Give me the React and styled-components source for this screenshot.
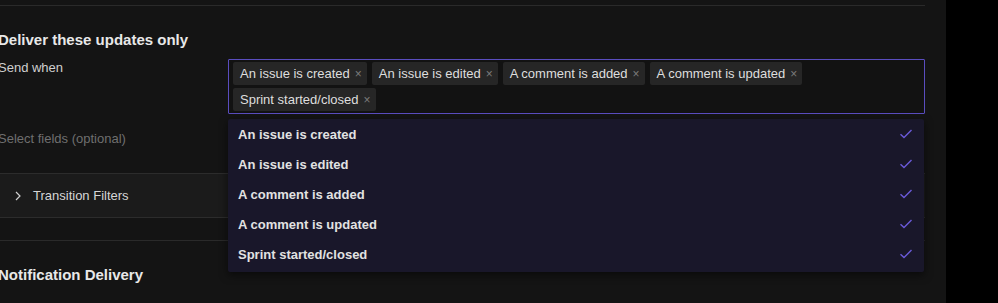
import React from "react";
import styled, { createGlobalStyle } from "styled-components";

const GlobalStyle = createGlobalStyle`
  html, body {
    margin: 0;
    padding: 0;
    background: #000;
    font-family: "Liberation Sans", Arial, sans-serif;
    overflow: hidden;
  }
`;

const Page = styled.div`
  width: 946px;
  height: 303px;
  background: #141414;
  overflow: hidden;
`;

const Content = styled.div`
  margin-left: -2px;
  width: 927px;
  padding-top: 5px;
`;

const Divider = styled.div`
  height: 1px;
  background: #2a2a2a;
  margin-top: ${(p) => p.$top || 0}px;
`;

const SectionTitle = styled.h3`
  margin: ${(p) => p.$top}px 0 0;
  font-size: 15px;
  line-height: 17px;
  font-weight: 700;
  color: #e8e8e8;
`;

const FieldRow = styled.div`
  display: flex;
  align-items: flex-start;
  margin-top: ${(p) => p.$top || 0}px;
`;

const Label = styled.div`
  width: 230px;
  flex-shrink: 0;
  font-size: 13px;
  line-height: 16px;
  color: ${(p) => (p.$muted ? "#6f6f6f" : "#cfcfcf")};
`;

const SelectWrap = styled.div`
  position: relative;
  flex: 1;
  margin-top: -1px;
`;

const SelectBox = styled.div`
  display: flex;
  flex-wrap: wrap;
  gap: 3px 5px;
  padding: 2px 4px;
  min-height: 49px;
  border: 1px solid #5a4dbf;
  border-radius: 1px;
  background: #121212;
`;

const Tag = styled.span`
  display: inline-flex;
  align-items: center;
  height: 23px;
  padding: 0 5px 0 7px;
  background: #262626;
  border-radius: 2px;
  color: #dedede;
  font-size: 13px;
`;

const TagClose = styled.span`
  margin-left: 5px;
  color: #7b7b7b;
  font-size: 12px;
`;

const Menu = styled.ul`
  position: absolute;
  left: 0;
  right: 1px;
  top: 60px;
  margin: 0;
  padding: 0 0 3px;
  list-style: none;
  background: #19172a;
  border-radius: 2px;
  box-shadow: 0 3px 8px rgba(0, 0, 0, 0.55);
  z-index: 2;
`;

const MenuItem = styled.li`
  display: flex;
  align-items: center;
  justify-content: space-between;
  height: 30px;
  padding: 0 11px 0 10px;
  color: #e2e2e2;
  font-size: 13px;
  font-weight: 700;
`;

const Collapse = styled.div`
  display: flex;
  align-items: center;
  gap: 11px;
  height: 43px;
  margin-top: 26px;
  padding-left: 16px;
  background: #1b1b1b;
  border-top: 1px solid #2c2c2c;
  border-bottom: 1px solid #2c2c2c;
  color: #d6d6d6;
  font-size: 13px;
`;

const Check = () => (
  <svg width="14" height="12" viewBox="0 0 14 12" fill="none">
    <path d="M1.5 6.2 L5 9.6 L12.5 2" stroke="#6a5ad8" strokeWidth="1.4" />
  </svg>
);

const Chevron = () => (
  <svg width="8" height="10" viewBox="0 0 8 10" fill="none">
    <path d="M2 1 L6 5 L2 9" stroke="#d0d0d0" strokeWidth="1.2" />
  </svg>
);

const events = [
  "An issue is created",
  "An issue is edited",
  "A comment is added",
  "A comment is updated",
  "Sprint started/closed",
];

export default function App() {
  return (
    <>
      <GlobalStyle />
      <Page>
        <Content>
          <Divider />
          <SectionTitle $top={25}>Deliver these updates only</SectionTitle>
          <FieldRow $top={12}>
            <Label>Send when</Label>
            <SelectWrap>
              <SelectBox>
                {events.map((e) => (
                  <Tag key={e}>
                    {e}
                    <TagClose>×</TagClose>
                  </Tag>
                ))}
              </SelectBox>
              <Menu>
                {events.map((e) => (
                  <MenuItem key={e}>
                    {e}
                    <Check />
                  </MenuItem>
                ))}
              </Menu>
            </SelectWrap>
          </FieldRow>
          <FieldRow $top={17}>
            <Label $muted>Select fields (optional)</Label>
          </FieldRow>
          <Collapse>
            <Chevron />
            Transition Filters
          </Collapse>
          <Divider $top={22} />
          <SectionTitle $top={25}>Notification Delivery</SectionTitle>
        </Content>
      </Page>
    </>
  );
}
